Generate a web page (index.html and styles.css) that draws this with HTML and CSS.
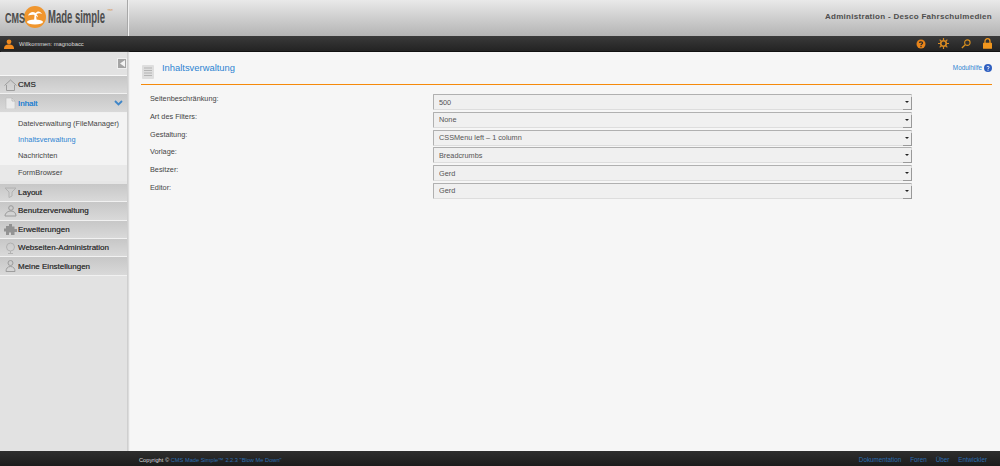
FILE: index.html
```html
<!DOCTYPE html>
<html lang="de">
<head>
<meta charset="utf-8">
<title>Inhaltsverwaltung</title>
<link rel="stylesheet" href="styles.css">
</head>
<body>
<header class="top">
  <div class="logo">
    <span class="logo-cms">CMS</span>
    <svg class="logo-mark" width="24" height="24" viewBox="0 0 24 24"><circle cx="12" cy="12" r="11" fill="#f0962e"/><ellipse cx="12" cy="17" rx="8" ry="2.600" fill="#fff"/><path d="M11 16.500 11.500 10h1.500l.8 6.500z" fill="#fff"/><path d="M5 10.500c1.500-3.500 5-4.500 7.500-2.500 2-2.500 5-2 6.500 1-2-1-4-.8-5.500.2 1 1 1.500 2 1.500 3-2-2-3.500-2.800-5-2.500-1.500 0-3.500.3-5 .8z" fill="#fff"/></svg>
    <span class="logo-made">Made simple</span><span class="logo-tm">™</span>
  </div>
  <div class="site-title">Administration - Desco Fahrschulmedien</div>
</header>
<div class="userbar">
  <div class="welcome">
    <svg width="10" height="10" viewBox="0 0 10 10"><circle cx="5" cy="2.800" r="2.400" fill="#f08a1e"/><path d="M0 10c0-3.500 2-4.500 5-4.500s5 1 5 4.500z" fill="#f08a1e"/></svg>
    <span>Willkommen: magnobacc</span>
  </div>
  <div class="tools">
    <svg width="10" height="10" viewBox="0 0 10 10"><circle cx="5" cy="5" r="4.500" fill="#e8841a"/><path d="M3.400 3.800C3.600 2.600 6.600 2.500 6.600 4 6.600 5 5 5 5 6.200" fill="none" stroke="#2a2a2a" stroke-width="1.200"/><rect x="4.400" y="7" width="1.200" height="1.200" fill="#2a2a2a"/></svg>
    <svg width="11" height="11" viewBox="0 0 12 12"><circle cx="6" cy="6" r="3" fill="none" stroke="#d98a22" stroke-width="1.800"/><path d="M6 0v2.500M6 9.500V12M0 6h2.500M9.500 6H12M1.800 1.800l1.800 1.800M8.400 8.400l1.800 1.800M10.200 1.800 8.400 3.600M3.600 8.400l-1.800 1.800" stroke="#d98a22" stroke-width="1.300"/></svg>
    <svg width="10" height="10" viewBox="0 0 11 11"><circle cx="7" cy="4" r="3" fill="none" stroke="#d9901e" stroke-width="1.200"/><path d="M4.800 6.200 1 10" stroke="#d9901e" stroke-width="1.500"/></svg>
    <svg width="9" height="11" viewBox="0 0 9 11"><path d="M2 5V3.200a2.500 2.500 0 0 1 5 0V5" fill="none" stroke="#f0961e" stroke-width="1.300"/><rect y="4.800" width="9" height="6" rx=".6" fill="#f0961e"/></svg>
  </div>
</div>
<div class="main">
  <nav class="side">
    <div class="collapse-row"><span class="collapse"><svg width="5" height="7" viewBox="0 0 5 7"><path d="M5 0v7L0 3.500z" fill="#f4f4f4"/></svg></span></div>
    <ul class="menu">
      <li class="item"><svg class="ico" width="13" height="12" viewBox="0 0 13 12"><path d="M.5 6.500 6.500 1l6 5.500M2.500 6v5.500h8V6" fill="none" stroke="#8c8c8c"/></svg><span>CMS</span></li>
      <li class="item active"><svg class="ico" width="13" height="12" viewBox="0 0 13 12"><path d="M2 1h6l3 3v8H2z" fill="#f4f4f4" stroke="#bbb" stroke-width=".6"/><path d="M8 1v3h3" fill="none" stroke="#999" stroke-width=".6"/></svg><span>Inhalt</span><svg class="chev" width="9" height="6" viewBox="0 0 9 6"><path d="M1 1l3.500 3.500L8 1" fill="none" stroke="#3f86c8" stroke-width="1.800"/></svg></li>
      <li class="sub">
        <a>Dateiverwaltung (FileManager)</a>
        <a class="cur">Inhaltsverwaltung</a>
        <a>Nachrichten</a>
        <a class="alt">FormBrowser</a>
      </li>
      <li class="item"><svg class="ico" width="13" height="12" viewBox="0 0 13 12"><path d="M1 2h11L8 6v4l-3 1.500V6z" fill="none" stroke="#a8a8a8"/></svg><span>Layout</span></li>
      <li class="item"><svg class="ico" width="13" height="12" viewBox="0 0 13 12"><circle cx="7" cy="3" r="2.300" fill="none" stroke="#888"/><path d="M1 11c0-3 3-5 6-5s5 2 5 5z" fill="none" stroke="#888"/></svg><span>Benutzerverwaltung</span></li>
      <li class="item"><svg class="ico" width="13" height="12" viewBox="0 0 13 12"><path d="M5 1h3v2.500h2.500V6H13v3h-2.500v3H7V9.500H5V12H2V8.500H0V5.500h2V3h3z" fill="#7e7e7e"/></svg><span>Erweiterungen</span></li>
      <li class="item"><svg class="ico" width="13" height="12" viewBox="0 0 13 12"><circle cx="6.500" cy="5" r="4" fill="none" stroke="#a8a8a8"/><path d="M6.500 9v2.500M4 11.500h5" stroke="#a8a8a8"/></svg><span>Webseiten-Administration</span></li>
      <li class="item"><svg class="ico" width="13" height="12" viewBox="0 0 13 12"><circle cx="6.500" cy="3" r="2.500" fill="none" stroke="#8c8c8c"/><path d="M2 11.500c0-3 1.500-5 4.500-5s4.500 2 4.500 5z" fill="none" stroke="#8c8c8c"/></svg><span>Meine Einstellungen</span></li>
    </ul>
  </nav>
  <main class="content">
    <div class="page-head">
      <div class="page-title">
        <svg width="14" height="16" viewBox="0 0 14 16"><rect x="1" y="1" width="12" height="14" rx="1" fill="#dedede"/><path d="M3 4h8M3 6.500h8M3 9h8M3 11.500h8" stroke="#b4b4b4"/></svg>
        <h1>Inhaltsverwaltung</h1>
      </div>
      <a class="help">Modulhilfe
        <svg width="8" height="8" viewBox="0 0 8 8"><circle cx="4" cy="4" r="4" fill="#2f5fc0"/><path d="M2.800 3.100C3 2 5.200 2 5.200 3.200 5.200 4 4 4 4 5" fill="none" stroke="#fff" stroke-width=".9"/><rect x="3.500" y="5.600" width="1" height="1" fill="#fff"/></svg>
      </a>
    </div>
    <form class="filters">
      <div class="row"><label>Seitenbeschränkung:</label><div class="field"><select><option>500</option></select><i class="arrow"></i></div></div>
      <div class="row"><label>Art des Filters:</label><div class="field"><select><option>None</option></select><i class="arrow"></i></div></div>
      <div class="row"><label>Gestaltung:</label><div class="field"><select><option>CSSMenu left – 1 column</option></select><i class="arrow"></i></div></div>
      <div class="row"><label>Vorlage:</label><div class="field"><select><option>Breadcrumbs</option></select><i class="arrow"></i></div></div>
      <div class="row"><label>Besitzer:</label><div class="field"><select><option>Gerd</option></select><i class="arrow"></i></div></div>
      <div class="row"><label>Editor:</label><div class="field"><select><option>Gerd</option></select><i class="arrow"></i></div></div>
    </form>
  </main>
</div>
<footer class="foot">
  <div class="copy">Copyright © <a>CMS Made Simple™ 2.2.3 "Blow Me Down"</a></div>
  <div class="links"><a>Dokumentation</a><a>Foren</a><a>Über</a><a>Entwickler</a></div>
</footer>
</body>
</html>
```

FILE: styles.css
```css
* { box-sizing: border-box; }
html, body { height: 100%; }
body {
  margin: 0;
  height: 466px;
  overflow: hidden;
  display: flex;
  flex-direction: column;
  font-family: "Liberation Sans", Arial, sans-serif;
  font-size: 8px;
  color: #333;
  background: #f6f6f6;
}
a { color: #2d84d2; }
ul { list-style: none; margin: 0; padding: 0; }

.top {
  height: 36px;
  flex: none;
  display: flex;
  justify-content: space-between;
  align-items: center;
  padding-right: 8px;
  background: linear-gradient(#e9e9e9, #b4b4b4);
}
.logo {
  width: 129px;
  height: 36px;
  flex: none;
  display: flex;
  align-items: center;
  padding: 0 0 2px 5px;
  border-right: 1px solid #f0f0f0;
  box-shadow: inset -1px 0 0 #a8a8a8;
  color: #4c4c4c;
  font-weight: bold;
}
.logo-cms { font-size: 15px; width: 18px; transform: scaleX(.6); transform-origin: left; white-space: nowrap; }
.logo-mark { margin-left: 0; }
.logo-made { font-size: 19px; white-space: nowrap; width: 57px; margin-left: 1px; transform: scaleX(.5); transform-origin: left; font-weight: bold; }
.logo-tm { font-size: 6px; color: #d9a06a; margin-top: -12px; margin-left: 2px; }
.site-title { font-weight: bold; font-size: 8px; letter-spacing: .29px; color: #4e4e4e; padding-bottom: 4px; }

.userbar {
  height: 16px;
  flex: none;
  display: flex;
  justify-content: space-between;
  align-items: center;
  padding: 0 8px 0 4px;
  background: linear-gradient(#3a3a3a, #232323);
  border-bottom: 1px solid #111;
  color: #ddd;
  font-size: 5.800px;
}
.welcome { display: flex; align-items: center; gap: 5px; }
.tools { display: flex; align-items: center; gap: 12px; }

.main { flex: 1; display: flex; min-height: 0; }

.side {
  width: 128px;
  flex: none;
  background: #e2e2e2;
  box-shadow: 1px 0 1px #dcdcdc;
  border-right: 1px solid #cfcfcf;
}
.collapse-row { height: 23px; display: flex; justify-content: flex-end; padding: 6px 0 0 0; }
.collapse {
  width: 10px;
  height: 11px;
  background: #a4a4a4;
  border: 1px solid #efefef;
  display: flex;
  align-items: center;
  justify-content: center;
}
.menu { border-top: 1px solid #f7f7f7; }
.item {
  height: 18.400px;
  display: flex;
  align-items: center;
  padding-left: 4px;
  background: linear-gradient(#c7c7c7, #d9d9d9);
  border-bottom: 1px solid #f1f1f1;
  color: #3c3c3c;
  font-size: 8px;
  font-weight: normal;
  text-shadow: 0 0 .4px #444;
}
.ico { margin-right: 1px; flex: none; opacity: .75; }
.item.active { color: #2d84d2; text-shadow: 0 0 .4px #2d84d2; position: relative; }
.chev { margin-left: auto; margin-right: 4px; }
.sub {
  height: 71px;
  padding-top: 3px;
  display: flex;
  flex-direction: column;
  background: #f3f3f3;
  border-bottom: 3px solid #e6e6e6;
}
.sub a {
  height: 16.300px;
  flex: none;
  padding-left: 18px;
  line-height: 16.300px;
  font-size: 7.400px;
  white-space: nowrap;
  color: #444;
}
.sub a.cur { color: #2d84d2; }
.sub a.alt { background: #e9e9e9; }

.content { flex: 1; min-width: 0; padding: 6px 8px 0 13px; }
.page-head {
  height: 27px;
  display: flex;
  justify-content: space-between;
  align-items: flex-start;
  padding-top: 3px;
  border-bottom: 1px solid #f58a0b;
}
.page-title { display: flex; align-items: flex-start; gap: 7px; }
.page-title svg { margin-top: 3px; }
h1 { margin: 0; font-size: 9.400px; font-weight: normal; color: #2d84d2; line-height: 14px; }
.help { display: flex; align-items: center; gap: 2px; font-size: 6.400px; line-height: 14px; }

.filters { padding: 9px 0 0 0; display: flex; flex-direction: column; }
.row { height: 17.800px; display: flex; }
.row label { width: 292px; flex: none; padding-left: 9px; font-size: 7.300px; line-height: 9px; color: #444; }
.field { position: relative; width: 479px; height: 16px; }
select {
  appearance: none;
  -webkit-appearance: none;
  display: block;
  width: 100%;
  height: 100%;
  padding: 0 0 0 5px;
  margin: 0;
  border: 1px solid #b0b0b0;
  border-right-color: #d8d8d8;
  border-bottom-color: #ddd;
  border-radius: 1px;
  background: #f0f0f0;
  font-family: "Liberation Sans", Arial, sans-serif;
  font-size: 7.300px;
  color: #555;
}
.arrow {
  position: absolute;
  right: 3px;
  top: 7px;
  width: 0;
  height: 0;
  border-left: 2px solid transparent;
  border-right: 2px solid transparent;
  border-top: 2px solid #222;
}
.field::after {
  content: "";
  position: absolute;
  right: 0;
  bottom: 0;
  width: 8px;
  height: 12px;
  border-right: 1px solid #999;
  border-bottom: 1px solid #999;
}

.foot {
  height: 15px;
  flex: none;
  display: flex;
  justify-content: space-between;
  align-items: center;
  padding: 2px 13px 0 139px;
  background: linear-gradient(#2e2e2e, #1c1c1c);
  color: #ddd;
  font-size: 5.700px;
}
.foot a { color: #2c6db0; }
.links { display: flex; gap: 9px; font-size: 6.300px; }
```
